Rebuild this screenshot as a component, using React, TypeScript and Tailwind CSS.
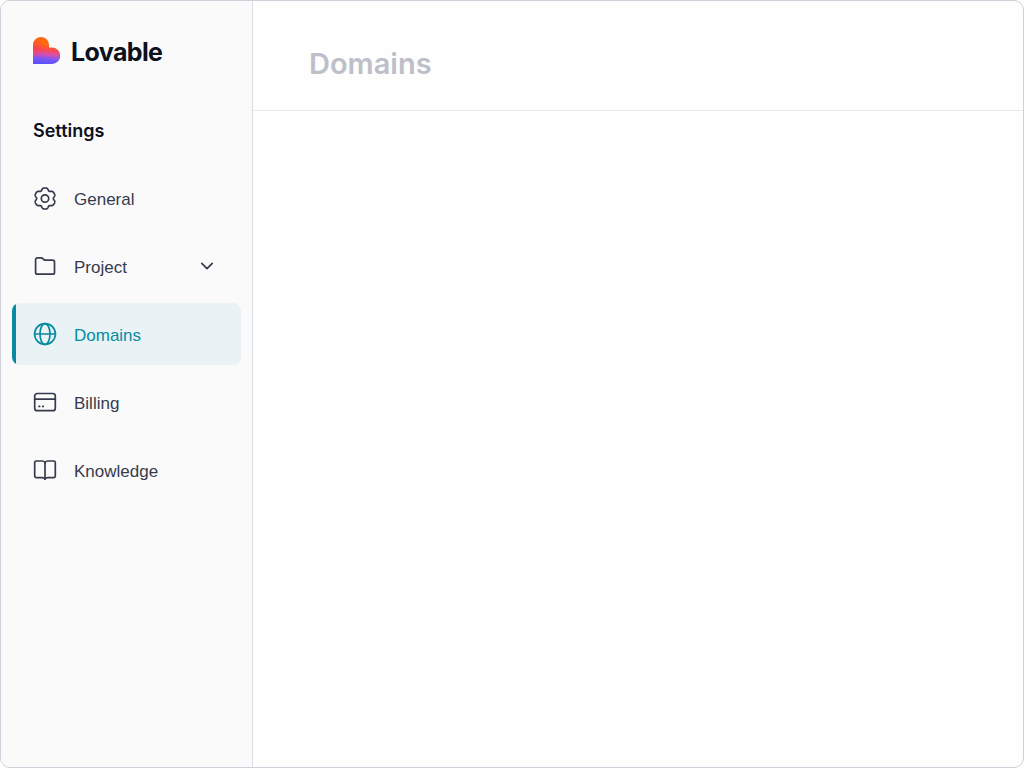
import type { ReactNode } from 'react';

const stroke = {
  fill: 'none',
  stroke: 'currentColor',
  strokeWidth: 1.7,
  strokeLinecap: 'round' as const,
  strokeLinejoin: 'round' as const,
  'aria-hidden': true,
};

const heart = 'M0 27V8a8 8 0 0 1 16 0v2.500h3a8.200 8.200 0 0 1 0 16.500Z';

function Logo() {
  return (
    <svg viewBox="0 0 27 27" className="mb-1 size-[27px] shrink-0" aria-hidden="true">
      <defs>
        <linearGradient id="base" x1="0.55" y1="0" x2="0.45" y2="1">
          <stop offset="0.28" stopColor="#ff6a10" />
          <stop offset="0.46" stopColor="#fb4a48" />
          <stop offset="0.64" stopColor="#d94fae" />
          <stop offset="0.82" stopColor="#7a57f5" />
          <stop offset="1" stopColor="#5a51fa" />
        </linearGradient>
        <radialGradient id="side" cx="0" cy="0.38" r="0.4">
          <stop offset="0" stopColor="#fa3a4c" stopOpacity="0.7" />
          <stop offset="1" stopColor="#fa3a4c" stopOpacity="0" />
        </radialGradient>
      </defs>
      <path d={heart} fill="url(#base)" />
      <path d={heart} fill="url(#side)" />
    </svg>
  );
}

const gearPoints = Array.from({ length: 180 }, (_, i) => {
  const a = (i * Math.PI) / 90;
  const r = 9.7 + 1.1 * Math.cos(6 * a) - 0.3 * Math.cos(12 * a);
  return `${(12 + r * Math.sin(a)).toFixed(2)},${(12.5 - r * Math.cos(a)).toFixed(2)}`;
}).join(' ');

function GearIcon() {
  return (
    <svg viewBox="0 0 24 24" className="size-6" {...stroke}>
      <polygon points={gearPoints} />
      <circle cx="12" cy="12.500" r="3.700" />
    </svg>
  );
}

function FolderIcon() {
  return (
    <svg viewBox="0 0 24 24" className="size-6" {...stroke}>
      <path d="M2.600 18.400V5.800a2 2 0 0 1 2-2h3.700a2 2 0 0 1 1.500.7l.7.900a2 2 0 0 0 1.500.7h7.500a2 2 0 0 1 2 2v10.300a1.800 1.800 0 0 1-1.800 1.800H4.400a1.800 1.800 0 0 1-1.800-1.800Z" />
    </svg>
  );
}

function GlobeIcon() {
  return (
    <svg viewBox="0 0 24 24" className="size-6" {...stroke}>
      <circle cx="12" cy="12" r="10.400" />
      <ellipse cx="12" cy="12" rx="5" ry="10.400" />
      <path d="M1.600 12h20.800" />
    </svg>
  );
}

function CardIcon() {
  return (
    <svg viewBox="0 0 24 24" className="size-6" {...stroke}>
      <rect x="1.700" y="3.500" width="20.600" height="17.200" rx="2.500" />
      <path d="M1.700 9.200h20.600" />
      <path d="M6 16.400h.6M9.700 16.400h.6" />
    </svg>
  );
}

function BookIcon() {
  return (
    <svg viewBox="0 0 24 24" className="size-6" {...stroke}>
      <path d="M12 5v16" />
      <path d="M12 5a2.600 2.600 0 0 0-2.500-2H3.200a1.500 1.500 0 0 0-1.500 1.500v13.600a1.500 1.500 0 0 0 1.500 1.500h6c1.200 0 2.300.4 2.800 1.400.5-1 1.600-1.400 2.800-1.400h6a1.500 1.500 0 0 0 1.500-1.500V4.500A1.500 1.500 0 0 0 20.800 3h-6.300A2.600 2.600 0 0 0 12 5Z" />
    </svg>
  );
}

function Chevron() {
  return (
    <svg viewBox="0 0 16 16" className="ml-auto size-4" {...stroke}>
      <path d="m2.800 5.400 5.200 5.300 5.200-5.300" />
    </svg>
  );
}

type ItemProps = { icon: ReactNode; label: string };

const row = 'flex h-[62px] w-full items-center gap-[17px] rounded-lg pr-[26px] pl-[21px] text-[17px]';

function NavLink({ icon, label, active = false }: ItemProps & { active?: boolean }) {
  return (
    <a
      href={`#${label.toLowerCase()}`}
      aria-current={active ? 'page' : undefined}
      className={
        active
          ? `${row} relative overflow-hidden bg-[#e9f3f5] text-[#088ba2] before:absolute before:inset-y-0 before:left-0 before:w-1 before:bg-[#088ba2]`
          : `${row} text-[#353b4c]`
      }
    >
      {icon}
      <span className="pt-[3px]">{label}</span>
    </a>
  );
}

export default function App() {
  return (
    <div className="flex min-h-screen overflow-hidden rounded-[10px] border border-[#ced0da] bg-[#fefefe] font-['Liberation_Sans',Arial,sans-serif]">
      <aside className="w-[252px] shrink-0 border-r border-[#dcdde3] bg-[#fafafb] px-[11px]">
        <div className="flex items-center gap-[11px] pt-[31px] pl-[21px]">
          <Logo />
          <span className="font-['Inter',sans-serif] text-[25px] leading-10 font-bold tracking-tight text-[#0d111c]">
            Lovable
          </span>
        </div>
        <h2 className="mt-[47px] pl-[21px] font-['Inter',sans-serif] text-lg leading-6 font-semibold text-[#0d111c]">
          Settings
        </h2>
        <nav aria-label="Settings" className="mt-6 flex flex-col gap-1.5">
          <NavLink icon={<GearIcon />} label="General" />
          <button type="button" aria-expanded="false" className={`${row} text-[#353b4c]`}>
            <FolderIcon />
            <span className="pt-[3px]">Project</span>
            <Chevron />
          </button>
          <NavLink icon={<GlobeIcon />} label="Domains" active />
          <NavLink icon={<CardIcon />} label="Billing" />
          <NavLink icon={<BookIcon />} label="Knowledge" />
        </nav>
      </aside>
      <main className="min-w-0 flex-1">
        <header className="flex h-[110px] items-center border-b border-[#e9e9eb] px-14 pt-4">
          <h1 className="font-['Inter',sans-serif] text-[29px] leading-9 font-semibold text-[#bdbfc9]">
            Domains
          </h1>
        </header>
      </main>
    </div>
  );
}
